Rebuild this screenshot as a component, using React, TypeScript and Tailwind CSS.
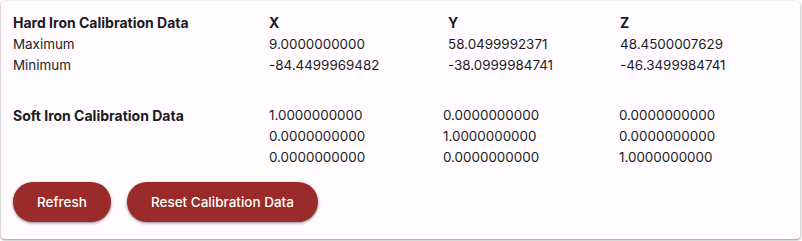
const hardRows = [
  { label: "Maximum", x: "9.0000000000", y: "58.0499992371", z: "48.4500007629" },
  { label: "Minimum", x: "-84.4499969482", y: "-38.0999984741", z: "-46.3499984741" },
];

const softRows = [
  ["1.0000000000", "0.0000000000", "0.0000000000"],
  ["0.0000000000", "1.0000000000", "0.0000000000"],
  ["0.0000000000", "0.0000000000", "1.0000000000"],
];

const btn =
  "h-10 px-6 rounded-full bg-[#9b2a2a] text-white text-[13.5px] font-medium shadow-[0_1px_2px_rgba(0,0,0,0.3),0_1px_3px_1px_rgba(0,0,0,0.15)]";

const App = () => {
  return (
    <div className="bg-white w-[802px] h-[241px] pt-px pl-px font-[Inter,sans-serif]">
      <div className="w-[799px] h-[238px] rounded-[4px] bg-[#fffbfe] shadow-[0_1px_2px_rgba(0,0,0,0.3),0_1px_3px_1px_rgba(0,0,0,0.12)] px-3 pt-[11px] text-[#1c1b1f] text-[13.4px]">
        {/* HARD IRON */}
        <div className="grid grid-cols-[256px_179px_172px_1fr] leading-[21px]">
          <div className="font-bold text-[14px] leading-[22px]">Hard Iron Calibration Data</div>
          <div className="font-bold text-[14px] leading-[22px]">X</div>
          <div className="font-bold text-[14px] leading-[22px]">Y</div>
          <div className="font-bold text-[14px] leading-[22px]">Z</div>
          {hardRows.map((r) => (
            <div key={r.label} className="contents">
              <div>{r.label}</div>
              <div>{r.x}</div>
              <div>{r.y}</div>
              <div>{r.z}</div>
            </div>
          ))}
        </div>

        {/* SOFT IRON */}
        <div className="grid grid-cols-[256px_174px_176px_1fr] leading-[21px] mt-[29px]">
          <div className="font-bold text-[14px] row-span-3">Soft Iron Calibration Data</div>
          {softRows.map((r, i) => (
            <div key={i} className="contents">
              <div>{r[0]}</div>
              <div>{r[1]}</div>
              <div>{r[2]}</div>
            </div>
          ))}
        </div>

        <div className="flex gap-4 mt-[14px]">
          <button className={btn}>Refresh</button>
          <button className={btn}>Reset Calibration Data</button>
        </div>
      </div>
    </div>
  );
};

export default App;
